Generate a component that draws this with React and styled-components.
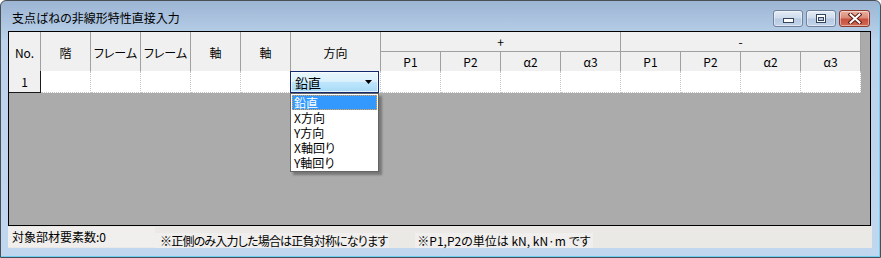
import React from "react";
import styled, { createGlobalStyle } from "styled-components";

const Global = createGlobalStyle`
  html, body { margin: 0; padding: 0; background: #ffffff; }
  body { font-family: "Noto Sans CJK JP", "Noto Sans", sans-serif; }
`;

const Window = styled.div`
  width: 881px;
  height: 258px;
  box-sizing: border-box;
  border: 1px solid #4a4e55;
  border-radius: 6px 6px 0 0;
  background: linear-gradient(#9cb5d3 0px, #b2cae4 28px, #bdd3eb 40px, #c1d7ef 100%);
  box-shadow: inset -2px -2px 0 -1px #6fd0f4;
  display: flex;
  flex-direction: column;
  overflow: hidden;
`;

const TitleBar = styled.div`
  height: 30px;
  flex: none;
  display: flex;
  align-items: flex-start;
  justify-content: space-between;
  padding: 0 10px 0 11px;
  box-sizing: border-box;
`;

const Title = styled.div`
  font-size: 12px;
  line-height: 16px;
  margin-top: 9px;
  color: #000;
  font-feature-settings: "palt";
`;

const Buttons = styled.div`
  display: flex;
  gap: 3px;
  margin-top: 9px;
`;

const CapButton = styled.div`
  width: ${(p) => p.$w}px;
  height: 17px;
  box-sizing: border-box;
  border: 1px solid ${(p) => (p.$close ? "#8a3a2e" : "#6f819b")};
  border-radius: 3px;
  background: ${(p) =>
    p.$close
      ? "linear-gradient(#eab0a2 0%, #da8a78 45%, #c7513f 55%, #d06a55 100%)"
      : "linear-gradient(#e4ecf6 0%, #cfdcec 45%, #b7cae2 55%, #c4d5ea 100%)"};
  box-shadow: inset 0 0 0 1px rgba(255, 255, 255, 0.45);
  display: flex;
  align-items: center;
  justify-content: center;
`;

const Body = styled.div`
  flex: 1;
  display: flex;
  flex-direction: column;
  padding: 0 8px 9px 7px;
`;

const GridBox = styled.div`
  width: 863px;
  height: 195px;
  box-sizing: border-box;
  border: 1px solid #000;
  background: #ababab;
`;

const COLS = "32px 50px 50px 50px 50px 50px 90px repeat(8, 60px)";

const Header = styled.div`
  display: grid;
  grid-template-columns: ${COLS};
  grid-template-rows: 20px 19px;
  width: 852px;
  background: #f0f0f0;
`;

const HeadCell = styled.div`
  grid-column: ${(p) => p.$col || "auto"};
  grid-row: ${(p) => p.$row || "auto"};
  box-sizing: border-box;
  border-right: 1px solid #a0a0a0;
  border-bottom: ${(p) => (p.$group ? "1px solid #a0a0a0" : "none")};
  display: flex;
  align-items: center;
  justify-content: center;
  padding-top: ${(p) => (p.$tall ? 1 : 0)}px;
  font-size: 12px;
  color: #000;
  font-feature-settings: "palt";
  white-space: nowrap;
`;

const DataRow = styled.div`
  display: grid;
  grid-template-columns: ${COLS};
  height: 22px;
  width: 852px;
`;

const RowHead = styled.div`
  box-sizing: border-box;
  background: #f0f0f0;
  border-right: 1px solid #1a1a1a;
  border-bottom: 1px solid #1a1a1a;
  display: flex;
  align-items: center;
  justify-content: center;
  font-size: 12px;
`;

const DataCell = styled.div`
  box-sizing: border-box;
  background: #fff;
  border-right: 1px dotted #c4c4c4;
  border-bottom: 1px dotted #c4c4c4;
`;

const ComboCell = styled.div`
  position: relative;
  background: #fff;
  border-bottom: 1px dotted #c4c4c4;
  border-right: 1px dotted #c4c4c4;
  box-sizing: border-box;
`;

const Combo = styled.div`
  position: absolute;
  left: -1px;
  top: 0;
  width: 89px;
  height: 22px;
  box-sizing: border-box;
  border: 1px solid #14286e;
  background: linear-gradient(#eaf6fd 0%, #d9f0fc 48%, #bee6fd 52%, #a7d9f5 100%);
  box-shadow: inset 0 0 0 1px rgba(255, 255, 255, 0.7);
  display: flex;
  align-items: center;
  justify-content: space-between;
  padding: 0 6px 0 4px;
  font-size: 13px;
  color: #000;
  z-index: 1;
`;

const List = styled.div`
  position: absolute;
  left: -1px;
  top: 22px;
  width: 89px;
  box-sizing: border-box;
  border: 1px solid #646464;
  background: #fff;
  padding: 1px;
  box-shadow: 3px 3px 2px rgba(0, 0, 0, 0.3);
  z-index: 2;
`;

const Item = styled.div`
  height: 15px;
  box-sizing: border-box;
  padding-left: 1px;
  font-size: 12px;
  line-height: 13px;
  color: ${(p) => (p.$sel ? "#fff" : "#000")};
  background: ${(p) => (p.$sel ? "#3399ff" : "transparent")};
  border: 1px dotted ${(p) => (p.$sel ? "#f0a040" : "transparent")};
  font-feature-settings: "palt";
`;

const StatusBar = styled.div`
  height: 22px;
  width: 864px;
  display: flex;
  align-items: flex-start;
  background: #ebe9e6;
  font-size: 12px;
  color: #000;
`;

const StatusLabel = styled.div`
  box-sizing: border-box;
  width: ${(p) => (p.$w ? `${p.$w}px` : "auto")};
  margin-top: ${(p) => p.$top}px;
  margin-left: ${(p) => p.$left || 0}px;
  height: ${(p) => p.$h}px;
  line-height: ${(p) => p.$h}px;
  padding-left: ${(p) => p.$pad}px;
  padding-right: 2px;
  background: #f0efed;
  letter-spacing: ${(p) => p.$ls || 0}px;
  font-feature-settings: "palt";
  white-space: nowrap;
`;

const MinIcon = () => (
  <svg width="11" height="6" viewBox="0 0 11 6" style={{ marginTop: 5 }}>
    <rect x="0.5" y="0.5" width="10" height="4" fill="#fff" stroke="#33445c" />
  </svg>
);

const MaxIcon = () => (
  <svg width="10" height="9" viewBox="0 0 10 9">
    <rect x="0.5" y="0.5" width="9" height="8" fill="#fff" stroke="#33445c" />
    <rect x="2.5" y="3.5" width="5" height="3" fill="#bccde3" stroke="#33445c" />
  </svg>
);

const CloseIcon = () => (
  <svg width="14" height="11" viewBox="0 0 14 11">
    <path d="M2.5 1.5 L11.5 9.5 M11.5 1.5 L2.5 9.5" stroke="#5a1d14" strokeWidth="4" strokeLinecap="square" />
    <path d="M2.5 1.5 L11.5 9.5 M11.5 1.5 L2.5 9.5" stroke="#fff" strokeWidth="2" strokeLinecap="square" />
  </svg>
);

const Arrow = () => (
  <svg width="7" height="4" viewBox="0 0 7 4">
    <path d="M0 0 H7 L3.5 4 Z" fill="#000" />
  </svg>
);

const leftCols = ["No.", "階", "フレーム", "フレーム", "軸", "軸", "方向"];
const subCols = ["P1", "P2", "α2", "α3", "P1", "P2", "α2", "α3"];
const options = ["鉛直", "X方向", "Y方向", "X軸回り", "Y軸回り"];

export default function App() {
  return (
    <>
      <Global />
      <Window>
        <TitleBar>
          <Title>支点ばねの非線形特性直接入力</Title>
          <Buttons>
            <CapButton $w={30}>
              <MinIcon />
            </CapButton>
            <CapButton $w={30}>
              <MaxIcon />
            </CapButton>
            <CapButton $w={31} $close>
              <CloseIcon />
            </CapButton>
          </Buttons>
        </TitleBar>
        <Body>
          <GridBox>
            <Header>
              {leftCols.map((c, i) => (
                <HeadCell key={i} $col={`${i + 1}`} $row="1 / span 2" $tall>
                  {c}
                </HeadCell>
              ))}
              <HeadCell $col="8 / span 4" $row="1" $group>
                +
              </HeadCell>
              <HeadCell $col="12 / span 4" $row="1" $group>
                -
              </HeadCell>
              {subCols.map((c, i) => (
                <HeadCell key={`s${i}`} $col={`${i + 8}`} $row="2">
                  {c}
                </HeadCell>
              ))}
            </Header>
            <DataRow>
              <RowHead>1</RowHead>
              {[0, 1, 2, 3, 4].map((i) => (
                <DataCell key={i} />
              ))}
              <ComboCell>
                <Combo>
                  <span>鉛直</span>
                  <Arrow />
                </Combo>
                <List>
                  {options.map((o, i) => (
                    <Item key={o} $sel={i === 0}>
                      {o}
                    </Item>
                  ))}
                </List>
              </ComboCell>
              {subCols.map((_, i) => (
                <DataCell key={`d${i}`} />
              ))}
            </DataRow>
          </GridBox>
          <StatusBar>
            <StatusLabel $w={147} $top={1} $h={20} $pad={4}>
              対象部材要素数:0
            </StatusLabel>
            <StatusLabel $top={7} $h={15} $pad={5} $ls={-0.8}>
              ※正側のみ入力した場合は正負対称になります
            </StatusLabel>
            <StatusLabel $top={7} $h={15} $pad={2} $left={26}>
              ※P1,P2の単位は kN, kN·m です
            </StatusLabel>
          </StatusBar>
        </Body>
      </Window>
    </>
  );
}
